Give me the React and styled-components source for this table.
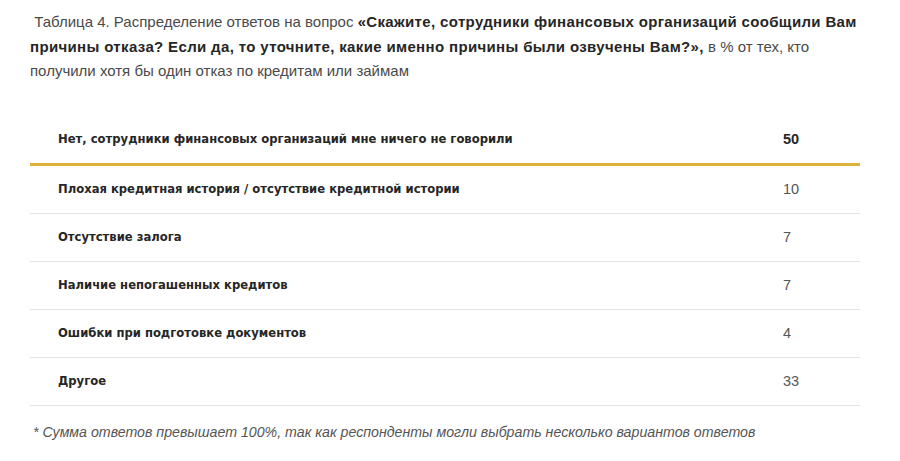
import React from 'react'
import styled, { createGlobalStyle } from 'styled-components'

const GlobalStyle = createGlobalStyle`
  body {
    margin: 0;
    background: #fff;
    font-family: "Liberation Sans", Arial, sans-serif;
  }
`

const rows = [
  { label: 'Плохая кредитная история / отсутствие кредитной истории', value: 10 },
  { label: 'Отсутствие залога', value: 7 },
  { label: 'Наличие непогашенных кредитов', value: 7 },
  { label: 'Ошибки при подготовке документов', value: 4 },
  { label: 'Другое', value: 33 },
]

export default function App() {
  return (
    <Page>
      <GlobalStyle />
      <Caption>
        &nbsp;Таблица 4. Распределение ответов на вопрос{' '}
        <strong>
          «Скажите, сотрудники финансовых организаций сообщили Вам причины отказа? Если да, то
          уточните, какие именно причины были озвучены Вам?»,
        </strong>{' '}
        в % от тех, кто получили хотя бы один отказ по кредитам или займам
      </Caption>
      <Table>
        <thead>
          <tr>
            <Label head>Нет, сотрудники финансовых организаций мне ничего не говорили</Label>
            <Value head>50</Value>
          </tr>
        </thead>
        <tbody>
          {rows.map((r) => (
            <tr key={r.label}>
              <Label>{r.label}</Label>
              <Value>{r.value}</Value>
            </tr>
          ))}
        </tbody>
      </Table>
      <Note>* Сумма ответов превышает 100%, так как респонденты могли выбрать несколько вариантов ответов</Note>
    </Page>
  )
}

const Page = styled.div`
  padding: 10px 40px 0 30px;
  width: 900px;
  box-sizing: border-box;
`

const Caption = styled.p`
  margin: 0;
  width: 834px;
  font-size: 15px;
  line-height: 24.5px;
  color: #4a4a4a;
  strong {
    color: #262626;
    letter-spacing: 0.35px;
  }
`

const Table = styled.table`
  margin-top: 31px;
  width: 830px;
  border-collapse: collapse;
  tbody tr {
    border-bottom: 1px solid #e4e4e4;
  }
  thead tr {
    border-bottom: 3px solid #ddb23a;
  }
`

const Label = styled.td`
  height: ${(p) => (p.head ? '48px' : '47px')};
  padding: 0 0 0 28px;
  width: 725px;
  font-family: "DejaVu Sans", sans-serif;
  font-weight: bold;
  font-size: 11.6px;
  color: #262626;
`

const Value = styled.td`
  padding: 0;
  font-size: 14.5px;
  font-weight: ${(p) => (p.head ? 'bold' : 'normal')};
  color: ${(p) => (p.head ? '#262626' : '#555')};
`

const Note = styled.p`
  margin: 18px 0 0 3px;
  font-size: 14.2px;
  font-style: italic;
  color: #555;
`
